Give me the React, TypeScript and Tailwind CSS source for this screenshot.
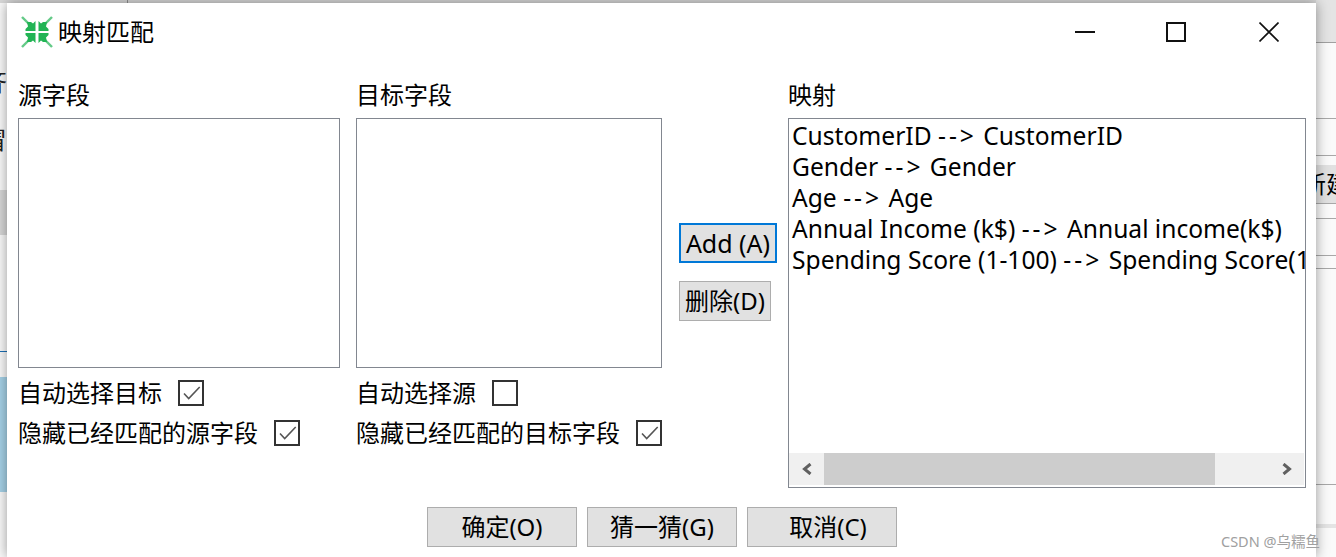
import type { ReactNode } from 'react';

const FONT = "font-['Noto_Sans','Noto_Sans_CJK_SC',sans-serif]";

// green "fit to centre" app icon
function AppIcon() {
  const green = '#22b455';
  return (
    <svg width="32" height="32" viewBox="0 0 32 32" className="shrink-0">
      <g fill={green}>
        <path d="M14.5 15H4.5V13L7 10.5L6 6H10L12 7.5L14.5 5Z" />
        <path d="M17.5 15H27.5V13L25 10.5L26 6H22L20 7.5L17.5 5Z" />
        <path d="M14.5 17H4.5V19L7 21.5L6 26H10L12 24.500L14.5 27Z" />
        <path d="M17.5 17H27.5V19L25 21.5L26 26H22L20 24.5L17.5 27Z" />
      </g>
      <g stroke={green} strokeWidth="2.4" opacity={0.7}>
        <line x1="1" y1="1" x2="9" y2="9" />
        <line x1="31" y1="1" x2="23" y2="9" />
        <line x1="1" y1="31" x2="9" y2="23" />
        <line x1="31" y1="31" x2="23" y2="23" />
      </g>
    </svg>
  );
}

function Checkbox({ checked }: { checked?: boolean }) {
  return (
    <span className="flex h-[26px] w-[26px] shrink-0 border-2 border-[#333333] bg-white">
      {checked && (
        <svg width="22" height="22" viewBox="0 0 22 22">
          <polyline points="4,11.5 8.7,16.5 19.7,5" fill="none" stroke="#555555" strokeWidth="1.6" />
        </svg>
      )}
    </span>
  );
}

function CheckRow({ label, checked }: { label: string; checked?: boolean }) {
  return (
    <div className="flex h-10 items-center gap-4">
      <span className="whitespace-nowrap">{label}</span>
      <Checkbox checked={checked} />
    </div>
  );
}

function Field({ label, width, checks }: { label: string; width: string; checks: ReactNode }) {
  return (
    <div className={`flex flex-col ${width}`}>
      <div className="h-8 leading-[31px]">{label}</div>
      <div className="mt-[7px] h-[250px] border border-[#828790] bg-white" />
      <div className="mt-[5px] flex flex-col">{checks}</div>
    </div>
  );
}

function FooterButton({ children, className = '' }: { children: ReactNode; className?: string }) {
  return (
    <button className={`flex h-10 w-[150px] items-center justify-center border border-[#adadad] bg-[#e1e1e1] text-[24px] leading-none text-black ${className}`}>
      {children}
    </button>
  );
}

const MAPPINGS = [
  ['CustomerID', 'CustomerID'],
  ['Gender', 'Gender'],
  ['Age', 'Age'],
  ['Annual Income (k$)', 'Annual income(k$)'],
  ['Spending Score (1-100)', 'Spending Score(1-100)'],
];

export default function App() {
  return (
    <div className={`relative h-[557px] w-[1336px] overflow-hidden bg-[#fafafa] text-[24px] text-black ${FONT}`}>
      {/* window behind the dialog */}
      <div className="absolute left-0 top-0 h-[3px] w-full bg-[#d8d8d8]" />
      <div className="absolute left-[127px] top-0 h-[3px] w-px bg-[#909090]" />
      <div className="absolute right-0 top-0 h-[42px] w-5 bg-[#e4e4e4]" />
      <span className="absolute left-[-17px] top-[66px] text-[24px] leading-8 text-[#222222]">齐</span>
      <span className="absolute left-[-17px] top-[124px] text-[24px] leading-8 text-[#222222]">冒</span>
      <div className="absolute left-0 top-[190px] h-[45px] w-2 bg-[#d8d8d8]" />
      <div className="absolute left-0 top-[351px] h-px w-2 bg-[#1a6fb5]" />
      <div className="absolute left-0 top-[377px] h-[115px] w-2 bg-[#a6d2e8]" />
      <div className="absolute right-0 top-[42px] h-px w-5 bg-[#a0a0a0]" />
      <div className="absolute right-0 top-[118px] h-px w-5 bg-[#a8a8a8]" />
      <div className="absolute right-0 top-[155px] h-px w-5 bg-[#a8a8a8]" />
      <div className="absolute right-0 top-[165px] flex h-[39px] w-5 items-center overflow-hidden border-b border-[#a8a8a8] bg-[#e1e1e1] text-[24px] leading-none whitespace-nowrap">
        <span className="ml-[-14px]">新建</span>
      </div>
      <div className="absolute right-0 top-[218px] h-px w-5 bg-[#a8a8a8]" />
      <div className="absolute right-0 top-[255px] h-px w-5 bg-[#a8a8a8]" />
      <div className="absolute right-0 top-[268px] h-px w-5 bg-[#a8a8a8]" />
      <div className="absolute right-0 top-[484px] h-px w-5 bg-[#a8a8a8]" />
      <div className="absolute right-0 top-[524px] h-[4px] w-5 bg-[#e4e4e4]" />

      {/* dialog */}
      <div className="absolute left-[7px] top-[3px] flex h-[554px] w-[1309px] flex-col bg-white shadow-[0_0_12px_rgba(0,0,0,0.4)]">
        <div className="flex h-[58px] items-center pl-[14px]">
          <AppIcon />
          <span className="ml-[5px] leading-none">映射匹配</span>
          <div className="ml-auto mr-[37px] flex items-center">
            <svg width="20" height="20" viewBox="0 0 20 20">
              <rect x="0" y="9" width="20" height="2" fill="#111111" />
            </svg>
            <svg width="20" height="20" viewBox="0 0 20 20" className="ml-[71px]">
              <rect x="1" y="1" width="18" height="18" fill="none" stroke="#111111" strokeWidth="2" />
            </svg>
            <svg width="20" height="20" viewBox="0 0 20 20" className="ml-[73px]">
              <path d="M0.5 0.5L19.5 19.5M19.5 0.5L0.5 19.5" fill="none" stroke="#111111" strokeWidth="1.6" />
            </svg>
          </div>
        </div>

        <div className="mt-[18px] flex pl-[11px]">
          <Field
            label="源字段"
            width="w-[322px]"
            checks={
              <>
                <CheckRow label="自动选择目标" checked />
                <CheckRow label="隐藏已经匹配的源字段" checked />
              </>
            }
          />
          <div className="ml-4">
            <Field
              label="目标字段"
              width="w-[306px]"
              checks={
                <>
                  <CheckRow label="自动选择源" />
                  <CheckRow label="隐藏已经匹配的目标字段" checked />
                </>
              }
            />
          </div>

          <div className="ml-[17px] flex w-[98px] flex-col items-start pt-[144px]">
            <button className="flex h-10 w-[98px] items-center justify-center border-2 border-[#0078d7] bg-[#e1e1e1] text-[25px] leading-none whitespace-nowrap">
              Add (A)
            </button>
            <button className="mt-[18px] flex h-10 w-[92px] items-center justify-center border border-[#adadad] bg-[#e1e1e1] leading-none whitespace-nowrap">
              删除(D)
            </button>
          </div>

          <div className="ml-[11px] flex w-[518px] flex-col">
            <div className="h-8 leading-[31px]">映射</div>
            <div className="relative mt-[7px] h-[370px] overflow-hidden border border-[#828790] bg-white">
              <div className="pl-[3px] pt-[1px] text-[24.6px]">
                {MAPPINGS.map(([from, to]) => (
                  <div key={from} className="h-[31px] leading-[31px] whitespace-nowrap">
                    {from} <span className="tracking-[3px]">--&gt;</span> {to}
                  </div>
                ))}
              </div>
              {/* horizontal scrollbar */}
              <div className="absolute bottom-[2px] left-0 right-[1px] flex h-8 bg-[#f0f0f0]">
                <div className="flex w-[35px] items-center justify-center">
                  <svg width="10" height="12" viewBox="0 0 10 12">
                    <polyline points="8.5,1 2.5,6 8.5,11" fill="none" stroke="#606060" strokeWidth="3" />
                  </svg>
                </div>
                <div className="w-[391px] bg-[#cdcdcd]" />
                <div className="ml-auto flex w-[35px] items-center justify-center">
                  <svg width="10" height="12" viewBox="0 0 10 12">
                    <polyline points="1.5,1 7.5,6 1.5,11" fill="none" stroke="#606060" strokeWidth="3" />
                  </svg>
                </div>
              </div>
            </div>
          </div>
        </div>

        <div className="mt-[19px] flex gap-[10px] pl-[420px]">
          <FooterButton>确定(O)</FooterButton>
          <FooterButton>猜一猜(G)</FooterButton>
          <FooterButton className="pl-3">取消(C)</FooterButton>
        </div>
      </div>

      {/* watermark */}
      <span className="absolute left-[1221px] top-[532px] text-[14.5px] leading-[18px] whitespace-nowrap text-[#a0a0a0]">
        CSDN @乌糯鱼
      </span>
    </div>
  );
}
